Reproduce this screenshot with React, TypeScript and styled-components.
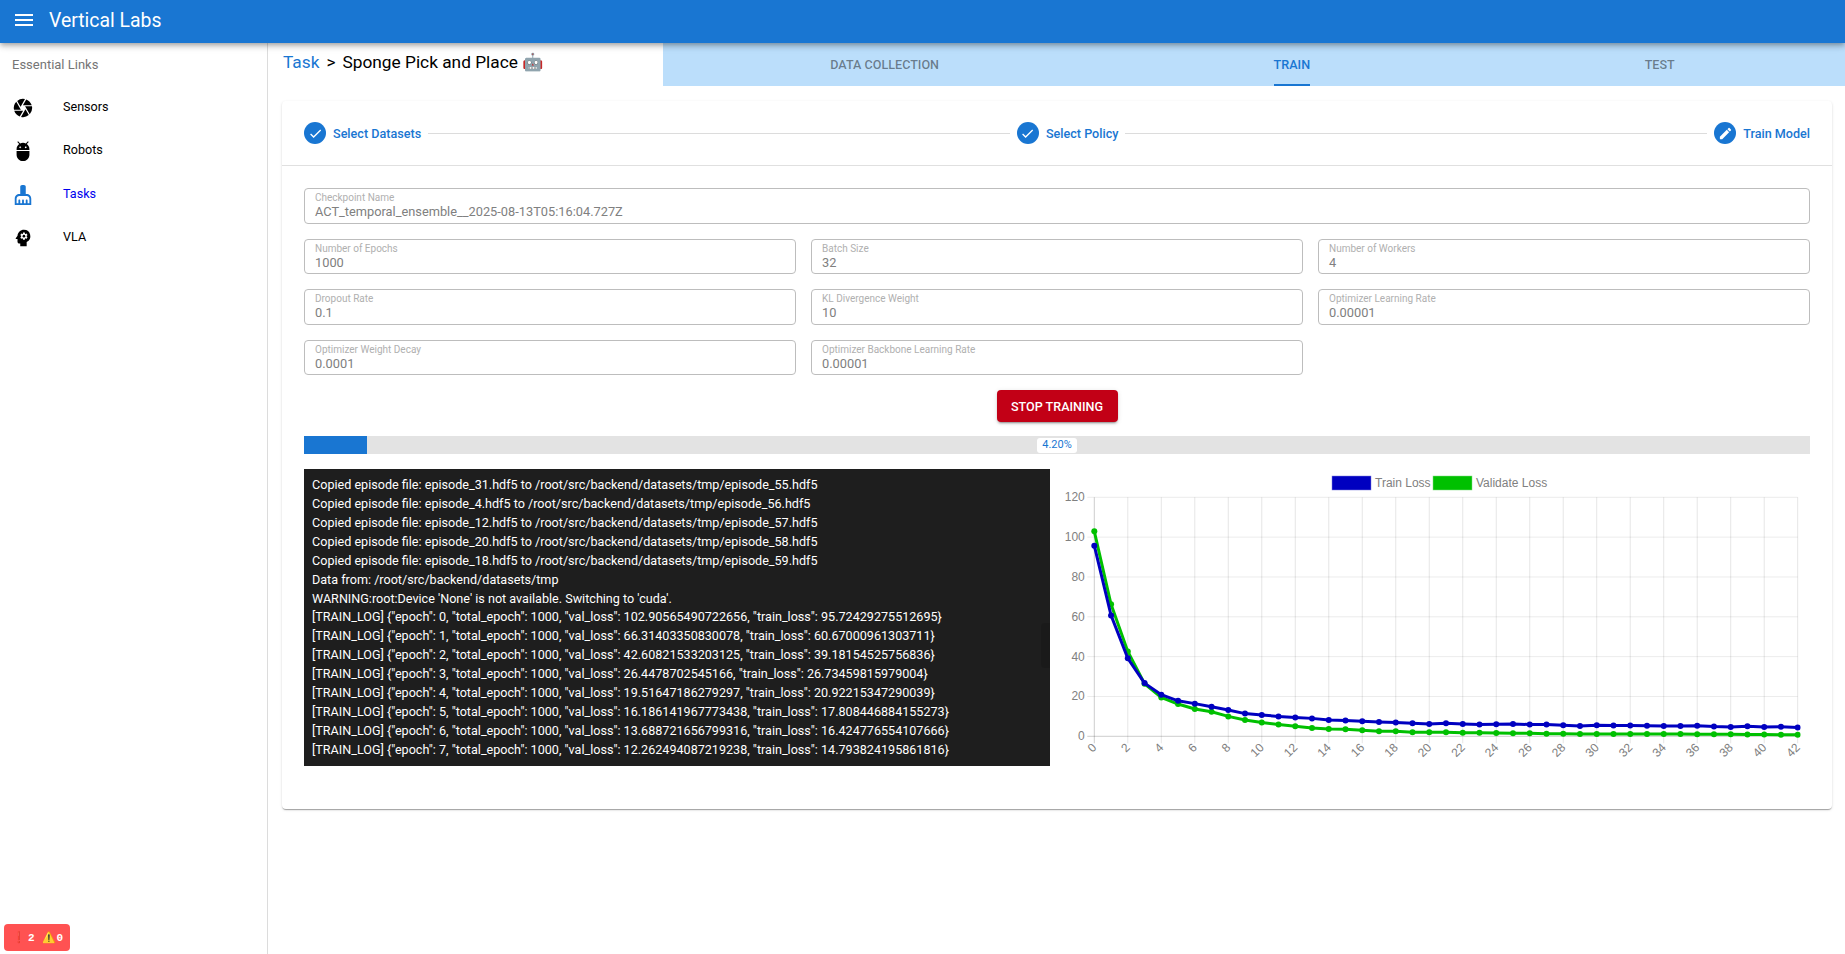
import React from "react";
import styled, { createGlobalStyle } from "styled-components";
import { MdMenu, MdCamera, MdAdb, MdCleaningServices, MdPsychology, MdCheck, MdEdit } from "react-icons/md";

const BLUE = "#1976d2";

const GlobalStyle = createGlobalStyle`
    html, body {
        margin: 0;
        height: 100%;
        overflow: hidden;
        background: #fff;
        font-family: Roboto, "Noto Sans", sans-serif;
    }
    * {
        box-sizing: border-box;
    }
`;

const navItems = [
    { label: "Sensors", icon: MdCamera },
    { label: "Robots", icon: MdAdb },
    { label: "Tasks", icon: MdCleaningServices, active: true },
    { label: "VLA", icon: MdPsychology },
];

const steps = [
    { label: "Select Datasets", done: true },
    { label: "Select Policy", done: true },
    { label: "Train Model", done: false },
];

const fields = [
    { label: "Number of Epochs", value: "1000" },
    { label: "Batch Size", value: "32" },
    { label: "Number of Workers", value: "4" },
    { label: "Dropout Rate", value: "0.1" },
    { label: "KL Divergence Weight", value: "10" },
    { label: "Optimizer Learning Rate", value: "0.00001" },
    { label: "Optimizer Weight Decay", value: "0.0001" },
    { label: "Optimizer Backbone Learning Rate", value: "0.00001" },
];

const copyLines = [
    "Copied episode file: episode_31.hdf5 to /root/src/backend/datasets/tmp/episode_55.hdf5",
    "Copied episode file: episode_4.hdf5 to /root/src/backend/datasets/tmp/episode_56.hdf5",
    "Copied episode file: episode_12.hdf5 to /root/src/backend/datasets/tmp/episode_57.hdf5",
    "Copied episode file: episode_20.hdf5 to /root/src/backend/datasets/tmp/episode_58.hdf5",
    "Copied episode file: episode_18.hdf5 to /root/src/backend/datasets/tmp/episode_59.hdf5",
    "Data from: /root/src/backend/datasets/tmp",
    "WARNING:root:Device 'None' is not available. Switching to 'cuda'.",
];

const trainLines = [
    '[TRAIN_LOG] {"epoch": 0, "total_epoch": 1000, "val_loss": 102.90565490722656, "train_loss": 95.72429275512695}',
    '[TRAIN_LOG] {"epoch": 1, "total_epoch": 1000, "val_loss": 66.31403350830078, "train_loss": 60.67000961303711}',
    '[TRAIN_LOG] {"epoch": 2, "total_epoch": 1000, "val_loss": 42.60821533203125, "train_loss": 39.18154525756836}',
    '[TRAIN_LOG] {"epoch": 3, "total_epoch": 1000, "val_loss": 26.4478702545166, "train_loss": 26.73459815979004}',
    '[TRAIN_LOG] {"epoch": 4, "total_epoch": 1000, "val_loss": 19.51647186279297, "train_loss": 20.92215347290039}',
    '[TRAIN_LOG] {"epoch": 5, "total_epoch": 1000, "val_loss": 16.186141967773438, "train_loss": 17.808446884155273}',
    '[TRAIN_LOG] {"epoch": 6, "total_epoch": 1000, "val_loss": 13.688721656799316, "train_loss": 16.424776554107666}',
    '[TRAIN_LOG] {"epoch": 7, "total_epoch": 1000, "val_loss": 12.262494087219238, "train_loss": 14.793824195861816}',
];

const trainLoss = [
    95.7, 60.7, 39.2, 26.7, 20.9, 17.8, 16.4, 14.8, 13.2, 11.4, 10.7, 10, 9.5, 9, 8.2, 7.9, 7.5, 7.2, 6.9, 6.5, 6.2, 6.5,
    6.2, 5.9, 6, 6.2, 5.9, 5.9, 5.5, 5.2, 5.5, 5.4, 5.4, 5.3, 5.2, 5.2, 5.3, 4.9, 4.7, 5, 4.7, 4.8, 4.4,
];
const valLoss = [
    102.9, 66.3, 42.6, 26.4, 19.5, 16.2, 13.7, 12.3, 10, 8.2, 6.9, 5.9, 5, 4.2, 3.7, 3.5, 3, 2.5, 2.5, 2, 2, 2, 1.8, 1.8,
    1.7, 1.5, 1.5, 1.3, 1.3, 1.2, 1.2, 1.2, 1.1, 1.1, 1.1, 1.1, 1, 1, 1, 0.9, 0.9, 0.8, 0.8,
];

// chart area inside the svg, in px
const LEFT = 44.3;
const RIGHT = 747.7;
const TOP = 28.3;
const BOTTOM = 267.3;
const toX = (i: number) => LEFT + (i * (RIGHT - LEFT)) / 42;
const toY = (v: number) => BOTTOM - (v * (BOTTOM - TOP)) / 120;

const Series = ({ data, color }: { data: number[]; color: string }) => (
    <g clipPath="url(#plot)">
        <polyline
            points={data.map((v, i) => `${toX(i)},${toY(v)}`).join(" ")}
            fill="none"
            stroke={color}
            strokeWidth={3}
        />
        {data.map((v, i) => (
            <circle key={i} cx={toX(i)} cy={toY(v)} r={3} fill={color} />
        ))}
    </g>
);

const LossChart = () => {
    const xTicks = Array.from({ length: 22 }, (_, i) => i * 2);
    const yTicks = [0, 20, 40, 60, 80, 100, 120];
    return (
        <ChartSvg viewBox="0 0 760 297">
            <defs>
                <clipPath id="plot">
                    <rect x={0} y={0} width={RIGHT + 3} height={297} />
                </clipPath>
            </defs>
            <rect x={282} y={7} width={39} height={14} fill="#0000c0" stroke="#8080e0" strokeWidth={0.5} />
            <ChartText x={325} y={18} fill="#808080">Train Loss</ChartText>
            <rect x={383} y={7} width={39} height={14} fill="#00c000" stroke="#80e080" strokeWidth={0.5} />
            <ChartText x={426} y={18} fill="#808080">Validate Loss</ChartText>

            {yTicks.map((t) => (
                <g key={t}>
                    <line
                        x1={LEFT - 7}
                        x2={RIGHT}
                        y1={toY(t)}
                        y2={toY(t)}
                        stroke={t === 0 ? "rgba(0,0,0,0.2)" : "rgba(0,0,0,0.08)"}
                    />
                    <ChartText x={LEFT - 9.5} y={toY(t) + 4} textAnchor="end" fill="#808080">
                        {t}
                    </ChartText>
                </g>
            ))}
            {xTicks.map((t) => (
                <g key={t}>
                    <line
                        x1={toX(t)}
                        x2={toX(t)}
                        y1={TOP}
                        y2={BOTTOM + 7}
                        stroke={t === 0 ? "rgba(0,0,0,0.2)" : "rgba(0,0,0,0.1)"}
                    />
                    <ChartText
                        x={toX(t) + 3}
                        y={BOTTOM + 12}
                        textAnchor="end"
                        fill="#808080"
                        transform={`rotate(-45 ${toX(t) + 3} ${BOTTOM + 12})`}
                    >
                        {t}
                    </ChartText>
                </g>
            ))}
            <Series data={valLoss} color="#00c000" />
            <Series data={trainLoss} color="#0000c0" />
        </ChartSvg>
    );
};

export default function App() {
    return (
        <Page>
            <GlobalStyle />
            <AppBar>
                <MdMenu size={24} color="#fff" />
                <Title>Vertical Labs</Title>
            </AppBar>
            <Body>
                <Sidebar>
                    <SidebarHeading>Essential Links</SidebarHeading>
                    {navItems.map((item) => (
                        <NavItem key={item.label} $active={item.active}>
                            <item.icon size={22} color={item.active ? BLUE : "#000"} />
                            <span>{item.label}</span>
                        </NavItem>
                    ))}
                </Sidebar>
                <Main>
                    <TopRow>
                        <Breadcrumb>
                            <BreadcrumbLink>Task</BreadcrumbLink>
                            <span>&gt;</span>
                            <span>Sponge Pick and Place 🤖</span>
                        </Breadcrumb>
                        <Tabs>
                            <Tab>DATA COLLECTION</Tab>
                            <Tab $active>TRAIN</Tab>
                            <Tab>TEST</Tab>
                        </Tabs>
                    </TopRow>
                    <Card>
                        <Stepper>
                            {steps.map((step, i) => (
                                <React.Fragment key={step.label}>
                                    <Step>
                                        <StepBadge>
                                            {step.done ? <MdCheck size={15} /> : <MdEdit size={15} />}
                                        </StepBadge>
                                        <StepLabel>{step.label}</StepLabel>
                                    </Step>
                                    {i < steps.length - 1 && <Connector />}
                                </React.Fragment>
                            ))}
                        </Stepper>
                        <CardBody>
                            <FormGrid>
                                <Field $wide>
                                    <FieldLabel>Checkpoint Name</FieldLabel>
                                    <FieldValue>ACT_temporal_ensemble__2025-08-13T05:16:04.727Z</FieldValue>
                                </Field>
                                {fields.map((f) => (
                                    <Field key={f.label}>
                                        <FieldLabel>{f.label}</FieldLabel>
                                        <FieldValue>{f.value}</FieldValue>
                                    </Field>
                                ))}
                            </FormGrid>
                            <StopButton>STOP TRAINING</StopButton>
                            <ProgressTrack>
                                <ProgressFill style={{ width: "4.2%" }} />
                                <ProgressPill>4.20%</ProgressPill>
                            </ProgressTrack>
                            <OutputRow>
                                <LogPanel>
                                    {copyLines.map((line) => (
                                        <LogLine key={line}>{line}</LogLine>
                                    ))}
                                    <TrainBlock>
                                        {trainLines.map((line) => (
                                            <LogLine key={line}>{line}</LogLine>
                                        ))}
                                    </TrainBlock>
                                    <LogHandle />
                                </LogPanel>
                                <LossChart />
                            </OutputRow>
                        </CardBody>
                    </Card>
                </Main>
            </Body>
            <CheckerBadge>
                <span>❗</span>
                <BadgeCount>2</BadgeCount>
                <WarnGlyph>⚠️</WarnGlyph>
                <BadgeCount>0</BadgeCount>
            </CheckerBadge>
        </Page>
    );
}

const Page = styled.div`
    height: 954px;
    display: flex;
    flex-direction: column;
`;

const AppBar = styled.header`
    height: 43px;
    flex: none;
    display: flex;
    align-items: center;
    gap: 13px;
    padding: 0 0 3px 12px;
    background: ${BLUE};
    position: relative;
    z-index: 2;
    box-shadow: 0 2px 4px -1px rgba(0, 0, 0, 0.2), 0 4px 5px 0 rgba(0, 0, 0, 0.14), 0 1px 10px 0 rgba(0, 0, 0, 0.12);
`;

const Title = styled.div`
    color: #fff;
    font-size: 19.4px;
    font-weight: 400;
`;

const Body = styled.div`
    flex: 1;
    display: flex;
    min-height: 0;
`;

const Sidebar = styled.aside`
    width: 268px;
    flex: none;
    border-right: 1px solid #dcdcdc;
    padding-top: 13px;
`;

const SidebarHeading = styled.div`
    font-size: 13px;
    line-height: 18px;
    color: #757575;
    padding-left: 12px;
    margin-bottom: 12.5px;
`;

const NavItem = styled.div<{ $active?: boolean }>`
    height: 43.3px;
    display: flex;
    align-items: center;
    padding-left: 12px;
    gap: 29px;
    font-size: 12.6px;
    color: ${(p) => (p.$active ? "#0000ee" : "#000")};

    span {
        margin-top: -3px;
    }
`;

const Main = styled.main`
    flex: 1;
    min-width: 0;
    display: flex;
    flex-direction: column;
`;

const TopRow = styled.div`
    height: 43px;
    flex: none;
    display: flex;
`;

const Breadcrumb = styled.div`
    width: 395px;
    flex: none;
    display: flex;
    gap: 7px;
    padding: 7px 0 0 15px;
    font-size: 17.3px;
    line-height: 24px;
    color: #000;
`;

const BreadcrumbLink = styled.span`
    color: ${BLUE};
`;

const Tabs = styled.nav`
    flex: 1;
    display: flex;
    justify-content: space-around;
    padding-right: 3px;
    background: #bbdefb;
`;

const Tab = styled.div<{ $active?: boolean }>`
    display: flex;
    align-items: center;
    padding-top: 1px;
    font-size: 12.6px;
    font-weight: 500;
    color: ${(p) => (p.$active ? BLUE : "rgba(0, 0, 0, 0.45)")};
    border-bottom: 2px solid ${(p) => (p.$active ? BLUE : "transparent")};
`;

const Card = styled.section`
    margin: 15px 13px 0 14px;
    height: 708px;
    background: #fff;
    border-radius: 4px;
    box-shadow: 0 2px 1px -1px rgba(0, 0, 0, 0.2), 0 1px 1px 0 rgba(0, 0, 0, 0.14), 0 1px 3px 0 rgba(0, 0, 0, 0.12);
`;

const Stepper = styled.div`
    height: 65px;
    display: flex;
    align-items: center;
    padding: 0 22px;
    border-bottom: 1px solid #e0e0e0;
`;

const Step = styled.div`
    display: flex;
    align-items: center;
    gap: 7px;
`;

const StepBadge = styled.div`
    width: 22px;
    height: 22px;
    border-radius: 50%;
    background: ${BLUE};
    color: #fff;
    display: flex;
    align-items: center;
    justify-content: center;
`;

const StepLabel = styled.div`
    font-size: 12.6px;
    font-weight: 500;
    color: ${BLUE};
`;

const Connector = styled.div`
    flex: 1;
    height: 1px;
    background: #dcdcdc;
    margin: 0 7px;
`;

const CardBody = styled.div`
    padding: 22px 22px 0;
`;

const FormGrid = styled.div`
    display: grid;
    grid-template-columns: repeat(3, 1fr);
    gap: 15px;
`;

const Field = styled.div<{ $wide?: boolean }>`
    grid-column: ${(p) => (p.$wide ? "1 / -1" : "auto")};
    height: 35.5px;
    border: 1px solid #bdbdbd;
    border-radius: 4px;
    padding: 3px 10px 0;
`;

const FieldLabel = styled.div`
    font-size: 10px;
    line-height: 12px;
    color: #b0b0b0;
`;

const FieldValue = styled.div`
    font-size: 12.8px;
    line-height: 16px;
    color: #808080;
`;

const StopButton = styled.button`
    display: block;
    width: 121px;
    height: 32px;
    margin: 15px auto 14px;
    padding: 0;
    border: 0;
    border-radius: 4px;
    background: #c20016;
    color: #fff;
    font-family: inherit;
    font-size: 12.6px;
    font-weight: 500;
    box-shadow: 0 3px 1px -2px rgba(0, 0, 0, 0.2), 0 2px 2px 0 rgba(0, 0, 0, 0.14), 0 1px 5px 0 rgba(0, 0, 0, 0.12);
`;

const ProgressTrack = styled.div`
    position: relative;
    height: 18px;
    background: #e3e3e3;
`;

const ProgressFill = styled.div`
    height: 100%;
    background: ${BLUE};
`;

const ProgressPill = styled.div`
    position: absolute;
    top: 2px;
    left: 50%;
    transform: translateX(-50%);
    width: 40px;
    height: 15px;
    border-radius: 3px;
    background: #fff;
    color: ${BLUE};
    font-size: 11px;
    line-height: 14px;
    text-align: center;
`;

const OutputRow = styled.div`
    display: flex;
    margin-top: 15px;
`;

const LogPanel = styled.div`
    position: relative;
    width: 746px;
    height: 297px;
    flex: none;
    overflow: hidden;
    padding: 5.5px 8px 0;
    background: #1e1e1e;
    color: #fff;
    font-size: 12.6px;
`;

const LogLine = styled.div`
    height: 19px;
    line-height: 19px;
    white-space: nowrap;
`;

const TrainBlock = styled.div`
    margin-top: -1px;
`;

const LogHandle = styled.div`
    position: absolute;
    right: 0;
    top: 154px;
    width: 9px;
    height: 45px;
    border-radius: 4px 0 0 4px;
    background: rgba(0, 0, 0, 0.12);
`;

const ChartSvg = styled.svg`
    width: 760px;
    height: 297px;
    flex: none;
    display: block;
`;

const ChartText = styled.text`
    font-family: "Liberation Sans", Arial, sans-serif;
    font-size: 12px;
`;

const CheckerBadge = styled.div`
    position: fixed;
    left: 4px;
    bottom: 3px;
    width: 66px;
    height: 27px;
    display: flex;
    align-items: center;
    padding-left: 8px;
    border-radius: 4px;
    background: #ff5252;
    font-size: 11px;
`;

const WarnGlyph = styled.span`
    font-size: 11px;
    margin: 0 -1px 0 7px;
`;

const BadgeCount = styled.span`
    color: #fff;
    font-family: "Liberation Mono", monospace;
    font-weight: 700;
    margin-left: 2px;
`;
